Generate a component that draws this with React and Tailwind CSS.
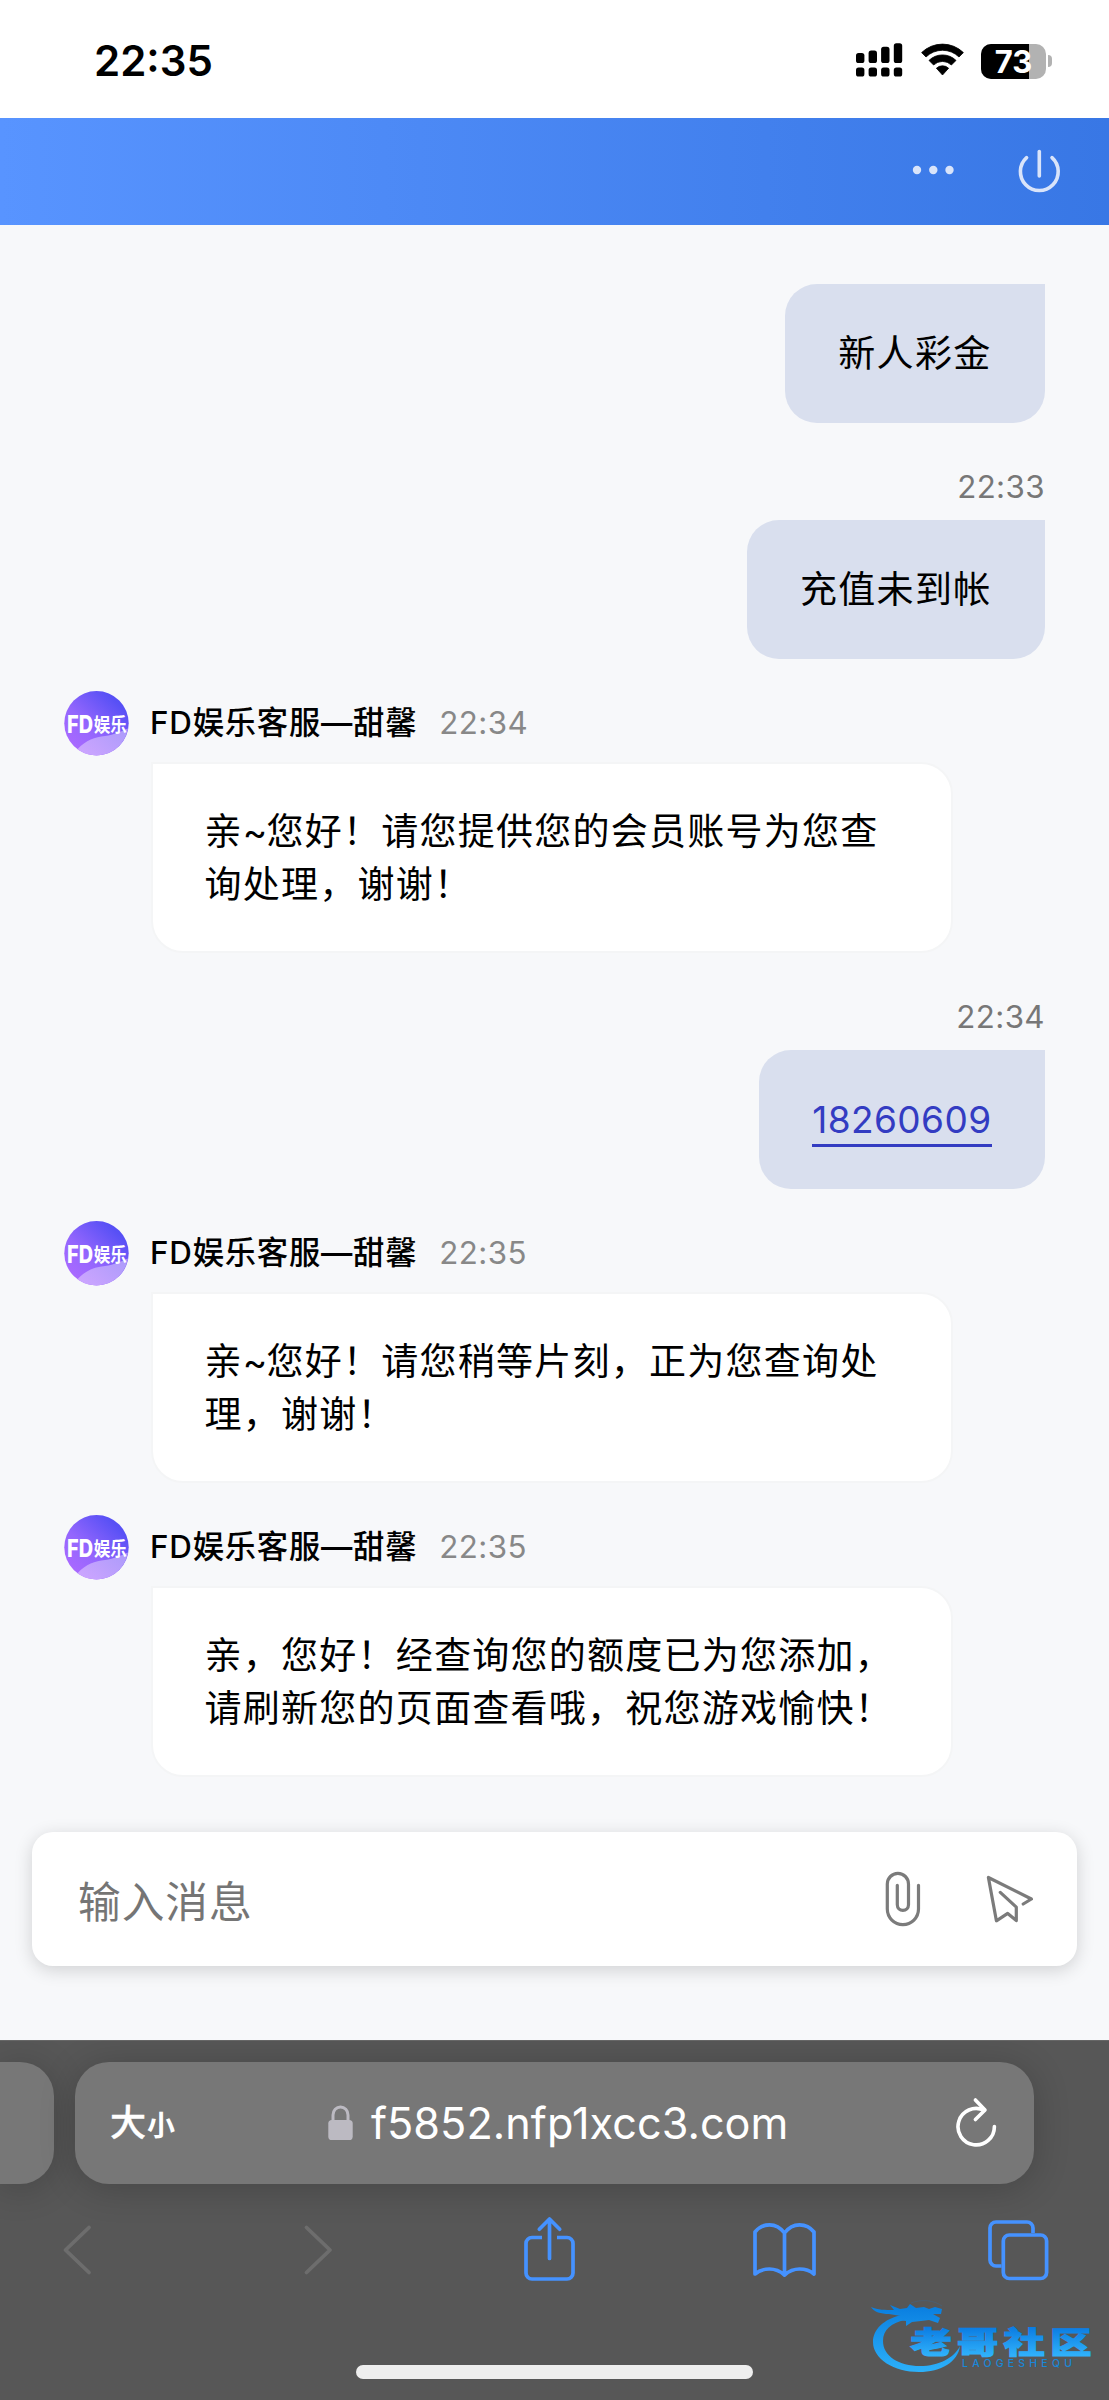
import React from 'react';

const AGENT_NAME = 'FD娱乐客服—甜馨';

const messages = [
  { from: 'me', lines: ['新人彩金'] },
  { from: 'me', time: '22:33', lines: ['充值未到帐'] },
  { from: 'agent', time: '22:34', lines: ['亲~您好！请您提供您的会员账号为您查', '询处理，谢谢！'] },
  { from: 'me', time: '22:34', link: '18260609' },
  { from: 'agent', time: '22:35', lines: ['亲~您好！请您稍等片刻，正为您查询处', '理，谢谢！'] },
  { from: 'agent', time: '22:35', lines: ['亲，您好！经查询您的额度已为您添加，', '请刷新您的页面查看哦，祝您游戏愉快！'] },
];

function StatusBar() {
  return (
    <div className="h-[118px] bg-white flex items-center pl-[94px] pr-[57px] pt-[4px]">
      <span className="text-[42px] leading-none font-semibold text-black">22:35</span>
      <svg className="ml-auto" width="48" height="36" viewBox="0 0 48 36">
        <rect x="0" y="10" width="8.4" height="10" rx="2.6" />
        <rect x="12.6" y="7.6" width="8.4" height="12.4" rx="2.6" />
        <rect x="25.1" y="3.8" width="8.4" height="16.2" rx="2.6" />
        <rect x="37.8" y="0.2" width="8.4" height="19.8" rx="2.6" />
        <rect x="0" y="24.4" width="8.4" height="9.2" rx="2.6" />
        <rect x="12.6" y="24.4" width="8.4" height="9.2" rx="2.6" />
        <rect x="25.1" y="24.4" width="8.4" height="9.2" rx="2.6" />
        <rect x="37.8" y="24.4" width="8.4" height="9.2" rx="2.6" />
      </svg>
      <svg className="ml-[17px]" width="43" height="36" viewBox="0 0 43 36">
        <path d="M0.6 9.6 A30 30 0 0 1 42.4 9.6 L38 14 A23.6 23.6 0 0 0 5 14 Z" stroke="#000" strokeWidth="0.8" strokeLinejoin="round" />
        <path d="M8 17.4 A19.4 19.4 0 0 1 35 17.4 L30.4 22 A12.8 12.8 0 0 0 12.6 22 Z" stroke="#000" strokeWidth="0.8" strokeLinejoin="round" />
        <path d="M15.4 25.2 A9 9 0 0 1 27.6 25.2 L21.5 32 Z" stroke="#000" strokeWidth="0.8" strokeLinejoin="round" />
      </svg>
      <div className="ml-[17px] relative w-[65px] h-[35px] rounded-[10px] overflow-hidden bg-[#b2b2b2]">
        <div className="w-[48px] h-full bg-black" />
        <span className="absolute inset-0 flex items-center justify-center text-white text-[31px] leading-[35px] font-bold">73</span>
      </div>
      <div className="ml-[2px] w-[4px] h-[12px] rounded-r-full bg-[#b2b2b2]" />
    </div>
  );
}

function ChatHeader() {
  return (
    <div className="h-[107px] bg-gradient-to-r from-[#5894ff] to-[#3877e5] flex items-center justify-end pr-[47px] pb-[3.5px]">
      <svg width="44" height="12" viewBox="0 0 44 12" fill="#d9e4fa">
        <circle cx="6" cy="6" r="4.2" />
        <circle cx="22.3" cy="6" r="4.2" />
        <circle cx="38.5" cy="6" r="4.2" />
      </svg>
      <svg className="ml-[61px]" width="46" height="46" viewBox="0 0 46 46" fill="none" stroke="#d9e4fa" strokeWidth="3.6" strokeLinecap="round">
        <path d="M10.6 10.6 A18.9 18.9 0 1 0 36 10.6" />
        <path d="M23.3 4.6 V29" />
      </svg>
    </div>
  );
}

function Avatar() {
  return (
    <svg width="65" height="65" viewBox="0 0 65 65" className="shrink-0">
      <defs>
        <linearGradient id="avatarBg" x1="0.1" y1="0.8" x2="0.75" y2="0.1">
          <stop offset="0" stopColor="#a869ff" />
          <stop offset="0.4" stopColor="#9366fd" />
          <stop offset="1" stopColor="#5750f5" />
        </linearGradient>
        <linearGradient id="avatarWave" x1="0" y1="1" x2="1" y2="0.4">
          <stop offset="0" stopColor="#cfa6ff" />
          <stop offset="1" stopColor="#b09cfb" />
        </linearGradient>
      </defs>
      <circle cx="32.5" cy="32.3" r="32.2" fill="url(#avatarBg)" />
      <path d="M13.5 58.3 C22 49 31 46 41 45 C50 44 58 40 64 37.500 A32.2 32.2 0 0 1 13.500 58.300 Z" fill="url(#avatarWave)" />
      <text x="3" y="41.5" fontSize="24" fontWeight="800" fill="#fff" textLength="26" lengthAdjust="spacingAndGlyphs">FD</text>
      <text x="29.8" y="40.5" fontSize="19" fontWeight="700" fill="#fff" textLength="33" lengthAdjust="spacingAndGlyphs">娱乐</text>
    </svg>
  );
}

function MyMessage({ message }) {
  return (
    <div className="flex flex-col items-end">
      {message.time && (
        <div className="h-[33px] mt-[48px] mb-[16px] text-[31.3px] leading-[33px] tracking-[0.4px] text-[#777]">{message.time}</div>
      )}
      <div className="h-[139px] px-[53.5px] pt-[1px] flex items-center rounded-[32px] rounded-tr-none bg-[#d9dfee] text-[37px] leading-[53.5px] tracking-[1.3px] text-black">
        {message.link ? (
          <a className="relative tracking-[0.4px] text-[#333cc2]">
            {message.link}
            <span className="absolute left-0 right-0 bottom-0 h-[3px] bg-[#333cc2]" />
          </a>
        ) : (
          message.lines[0]
        )}
      </div>
    </div>
  );
}

function AgentMessage({ message }) {
  return (
    <div className="pt-[32px]">
      <div className="flex items-center h-[65px]">
        <Avatar />
        <span className="ml-[21px] text-[31.3px] font-medium tracking-[0.8px] leading-none text-black">{AGENT_NAME}</span>
        <span className="ml-[22px] text-[31.3px] tracking-[0.4px] leading-none text-[#888]">{message.time}</span>
      </div>
      <div className="ml-[87px] mt-[5.5px] w-[802px] h-[191.6px] pl-[51.5px] pt-[2px] flex flex-col justify-center rounded-[32px] rounded-tl-none border-2 border-[#f4f5f6] bg-white text-[37px] leading-[53.5px] tracking-[1.25px] text-black whitespace-nowrap">
        {message.lines.map((line) => (
          <div key={line}>
            {line.startsWith('亲~') ? (
              <>亲<span className="tracking-[-0.8px]">~</span>{line.slice(2)}</>
            ) : (
              line
            )}
          </div>
        ))}
      </div>
    </div>
  );
}

function InputBar() {
  return (
    <div className="mx-[32px] h-[134px] rounded-[21px] bg-white shadow-[0_4px_18px_rgba(0,0,0,0.16)] flex items-center pl-[46px]">
      <span className="pt-[8px] text-[42.7px] tracking-[1px] leading-none text-[#757575]">输入消息</span>
      <svg className="ml-auto mr-[27px] mt-[2px]" width="180" height="80" viewBox="0 0 180 80" fill="none" stroke="#7b7b7b" strokeWidth="3.2" strokeLinecap="round" strokeLinejoin="round">
        <path d="M48.5 25.3 V49 a15.6 15.6 0 0 1 -31.2 0 V24 a10.6 10.6 0 0 1 21.2 0 V44.8 a5.6 5.6 0 0 1 -11.2 0 V25.3" />
        <path d="M153.2 44 L161.4 39 L118.4 17.5 L126.4 60.8 L137.7 53.4 L146.3 60.6 V47.2 L130.3 32.4" />
      </svg>
    </div>
  );
}

function SiteLogo() {
  return (
    <svg width="240" height="90" viewBox="0 0 240 90" className="absolute right-0 bottom-[11px]">
      <defs>
        <linearGradient id="ring" x1="0" y1="8" x2="0" y2="74" gradientUnits="userSpaceOnUse">
          <stop offset="0" stopColor="#0a7fe0" />
          <stop offset="1" stopColor="#2db2fb" />
        </linearGradient>
        <linearGradient id="word" x1="0" y1="-27" x2="0" y2="2" gradientUnits="userSpaceOnUse">
          <stop offset="0" stopColor="#0a7be2" />
          <stop offset="1" stopColor="#2fb0fa" />
        </linearGradient>
      </defs>
      <g fill="url(#ring)">
        <path d="M33 16 C14 20 4 31 4 43 C4 60 25 73 50 73 C72 73 89 63 91 47 C85 59 70 67 51 67 C30 67 14 57 14 42 C14 31 22 24 36 21 Z" />
        <path d="M2 8 C9 11 16 11 25 11 L21 6 L31 10 L38 9 L41 5 L47 9 L55 8 L60 10 L66 8 L73 10 L72 15 L64 15 L71 19 L69 24 L60 21 L52 22 L43 23 L37 27 L37 22 L30 21 L32 17 L20 15 C12 15 5 13 2 8 Z" />
      </g>
      <path d="M42 4 C52 0 65 1 73 7" fill="none" stroke="#3a6a94" strokeWidth="0.8" opacity="0.5" />
      <g transform="translate(41.5 54) scale(1.33 0.97)">
        <text x="0" y="0" fontSize="31" fontWeight="900" letterSpacing="4" fill="url(#word)" stroke="url(#word)" strokeWidth="1.2">老哥社区</text>
      </g>
      <text x="93" y="68" fontSize="10.5" fontWeight="500" fill="#1a87d8" textLength="110">LAOGESHEQU</text>
    </svg>
  );
}

function BrowserBar() {
  return (
    <div className="relative h-[360px] bg-[#575757] border-t border-[#666] overflow-hidden">
      <div className="flex mt-[20.5px] h-[122px]">
        <div className="w-[53.5px] h-full rounded-r-[34px] bg-[#777] shadow-[0_4px_36px_rgba(0,0,0,0.2)]" />
        <div className="ml-[21.5px] w-[959px] h-full rounded-[34px] bg-[#777] shadow-[0_4px_36px_rgba(0,0,0,0.2)] flex items-center text-white">
          <div className="ml-[35px] w-[66px] flex items-baseline leading-none">
            <span className="text-[36px] font-medium [-webkit-text-stroke:0.4px_#fff]">大</span>
            <span className="ml-[1px] text-[28px] font-bold">小</span>
          </div>
          <svg className="ml-[152px]" width="25" height="36" viewBox="0 0 25 36">
            <path d="M5 17 V10 a7.5 8 0 0 1 15 0 V17" fill="none" stroke="#bcbac2" strokeWidth="3" />
            <rect x="0.3" y="15" width="24.4" height="20" rx="3.6" fill="#bcbac2" />
          </svg>
          <span className="ml-[18px] w-[418px] pt-[2px] text-[43.2px] tracking-[0.05px] leading-none whitespace-nowrap">f5852.nfp1xcc3.com</span>
          <svg className="ml-[167px] mb-[2px]" width="42" height="50" viewBox="0 0 42 50" fill="none" stroke="#fff" strokeWidth="3.6" strokeLinecap="round" strokeLinejoin="round">
            <path d="M38.4 29.5 A18.2 18.2 0 1 1 28 13.2" />
            <path d="M19.4 3 L29 13 L19.4 22.5" />
          </svg>
        </div>
      </div>

      <div className="flex items-center h-[66px] mt-[33px] pl-[62px] pr-[60px]">
        <svg width="30" height="52" viewBox="0 0 30 52" fill="none" stroke="#6d6d6d" strokeWidth="3.8" strokeLinecap="round" strokeLinejoin="round">
          <path d="M27 3.5 L3.5 26 L27 48.5" />
        </svg>
        <svg className="ml-[211px]" width="30" height="52" viewBox="0 0 30 52" fill="none" stroke="#6d6d6d" strokeWidth="3.8" strokeLinecap="round" strokeLinejoin="round">
          <path d="M3.5 3.5 L27 26 L3.5 48.5" />
        </svg>
        <svg className="ml-[190px] -mt-[2px]" width="53" height="66" viewBox="0 0 53 66" fill="none" stroke="#4592ff" strokeWidth="3.7">
          <path d="M19 21.5 H9 a6 6 0 0 0 -6 6 V57 a6 6 0 0 0 6 6 H44 a6 6 0 0 0 6 -6 V27.5 a6 6 0 0 0 -6 -6 H34" />
          <path d="M26.5 42.5 V3 M16.3 13.2 L26.5 3 L36.7 13.2" strokeLinecap="round" strokeLinejoin="round" />
        </svg>
        <svg className="ml-[176px]" width="65" height="56" viewBox="0 0 65 56" fill="none" stroke="#4592ff" strokeWidth="3.7" strokeLinecap="round" strokeLinejoin="round">
          <path d="M32.5 11 C28 5 23 2.8 17.5 2.8 C11.5 2.8 6.5 5.5 3 10 V52 C6.5 49 11.5 47 17.5 47 C23 47 28 49 32.5 53 C37 49 42 47 47.5 47 C53.5 47 58.5 49 62 52 V10 C58.5 5.5 53.5 2.8 47.5 2.8 C42 2.8 37 5 32.5 11 V52" />
        </svg>
        <svg className="ml-auto" width="62" height="62" viewBox="0 0 62 62" fill="none" stroke="#4592ff" strokeWidth="3.7">
          <path d="M46 14 V9 a6 6 0 0 0 -6 -6 H9 a6 6 0 0 0 -6 6 V41 a6 6 0 0 0 6 6 H14.5" />
          <rect x="16.3" y="16" width="43.3" height="43.5" rx="6" />
        </svg>
      </div>

      <div className="mt-[82px] mx-auto w-[397px] h-[14px] rounded-full bg-[#eee]" />
      <SiteLogo />
    </div>
  );
}

function App() {
  return (
    <div className="w-[1109px] h-[2400px] flex flex-col overflow-hidden bg-[#f7f8fa] font-[Inter,'Noto_Sans_CJK_SC',sans-serif]">
      <StatusBar />
      <ChatHeader />
      <div className="h-[1607px] pt-[59px] pl-[64px] pr-[64px]">
        {messages.map((message, i) =>
          message.from === 'me' ? (
            <MyMessage key={i} message={message} />
          ) : (
            <AgentMessage key={i} message={message} />
          )
        )}
      </div>
      <InputBar />
      <div className="mt-auto">
        <BrowserBar />
      </div>
    </div>
  );
}

export default App;
